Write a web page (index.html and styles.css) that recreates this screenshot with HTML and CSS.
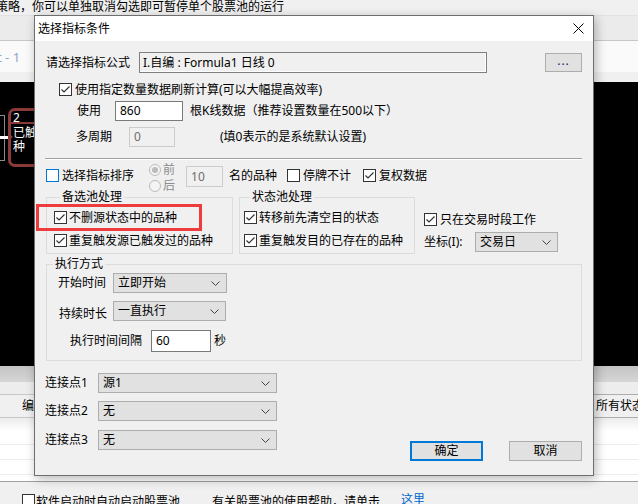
FILE: index.html
```html
<!DOCTYPE html>
<html lang="zh-CN">
<head>
<meta charset="utf-8">
<title>选择指标条件</title>
<link rel="stylesheet" href="styles.css">
</head>
<body>
<div class="bg">
  <div class="msg">策略，你可以单独取消勾选即可暂停单个股票池的运行</div>
  <div class="tabs"></div>
  <div class="toolbar"><span class="tb-text">t - 1</span></div>
  <div class="strip"></div>
  <div class="canvas">
    <div class="node-left"></div>
    <div class="arrow"></div>
    <div class="node">
      <div class="node-num">2</div>
      <div class="node-text">已触发<br>种</div>
    </div>
  </div>
  <div class="sbar"></div>
  <div class="gap"></div>
  <div class="colhdr"><span class="ch-left">编</span><span class="ch-right">所有状态</span></div>
  <div class="listfade"></div>
  <div class="rows"><div class="lrow"></div><div class="lrow"></div><div class="lrow"></div></div>
  <div class="footer">
    <span class="cb ft-cb"></span><span class="ft1">软件启动时自动启动股票池</span>
    <span class="ft2">有关股票池的使用帮助，请单击</span>
    <a class="link">这里</a>
  </div>
</div>

<div class="dialog">
  <div class="titlebar">
    <span class="title">选择指标条件</span>
    <svg class="close" width="11" height="11" viewBox="0 0 11 11"><path d="M0.5 0.5L10.5 10.5M10.5 0.5L0.5 10.5" stroke="#000" stroke-width="1" fill="none"/></svg>
  </div>
  <div class="dbody">
    <div class="r-formula">
      <span class="lbl-formula">请选择指标公式</span>
      <div class="formula">I.自编 : Formula1 日线 0</div>
      <div class="btn-dots">...</div>
    </div>

    <div class="r-chk1">
      <span class="cb"><svg width="11" height="11" viewBox="0 0 11 11"><polyline points="1.5,5.5 4,8 9.5,2.5" stroke="#333" stroke-width="1.2" fill="none"/></svg></span>
      <span class="cbl">使用指定数量数据刷新计算(可以大幅提高效率)</span>
    </div>

    <div class="r-use">
      <span class="lbl-use">使用</span>
      <div class="input in-use">860</div>
      <span class="after-use">根K线数据（推荐设置数量在500以下）</span>
    </div>

    <div class="r-multi">
      <span class="lbl-multi">多周期</span>
      <div class="input disabled in-multi">0</div>
      <span class="after-multi">(填0表示的是系统默认设置)</span>
    </div>

    <div class="sep"></div>

    <div class="r-sort">
      <span class="cb cb-focus s-cb1"></span>
      <span class="s-txt s-l1">选择指标排序</span>
      <div class="radios">
        <div class="rline"><span class="radio on"></span><span class="rl">前</span></div>
        <div class="rline"><span class="radio"></span><span class="rl">后</span></div>
      </div>
      <div class="input disabled in-top">10</div>
      <span class="s-txt s-l2">名的品种</span>
      <span class="cb s-cb2"></span>
      <span class="s-txt s-l3">停牌不计</span>
      <span class="cb s-cb3"><svg width="11" height="11" viewBox="0 0 11 11"><polyline points="1.5,5.5 4,8 9.5,2.5" stroke="#333" stroke-width="1.2" fill="none"/></svg></span>
      <span class="s-txt s-l3">复权数据</span>
    </div>

    <div class="r-groups">
      <fieldset class="grp grp1">
        <legend>备选池处理</legend>
        <div class="gline first"><span class="cb"><svg width="11" height="11" viewBox="0 0 11 11"><polyline points="1.5,5.5 4,8 9.5,2.5" stroke="#333" stroke-width="1.2" fill="none"/></svg></span><span class="gl">不删源状态中的品种</span></div>
        <div class="gline"><span class="cb"><svg width="11" height="11" viewBox="0 0 11 11"><polyline points="1.5,5.5 4,8 9.5,2.5" stroke="#333" stroke-width="1.2" fill="none"/></svg></span><span class="gl">重复触发源已触发过的品种</span></div>
      </fieldset>
      <fieldset class="grp grp2">
        <legend>状态池处理</legend>
        <div class="gline first"><span class="cb"><svg width="11" height="11" viewBox="0 0 11 11"><polyline points="1.5,5.5 4,8 9.5,2.5" stroke="#333" stroke-width="1.2" fill="none"/></svg></span><span class="gl">转移前先清空目的状态</span></div>
        <div class="gline"><span class="cb"><svg width="11" height="11" viewBox="0 0 11 11"><polyline points="1.5,5.5 4,8 9.5,2.5" stroke="#333" stroke-width="1.2" fill="none"/></svg></span><span class="gl">重复触发目的已存在的品种</span></div>
      </fieldset>
      <div class="side">
        <div class="side-chk"><span class="cb"><svg width="11" height="11" viewBox="0 0 11 11"><polyline points="1.5,5.5 4,8 9.5,2.5" stroke="#333" stroke-width="1.2" fill="none"/></svg></span><span class="cbl">只在交易时段工作</span></div>
        <div class="side-axis">
          <span class="lbl-axis">坐标(I):</span>
          <div class="select sel-axis"><span>交易日</span><svg width="9" height="5" viewBox="0 0 9 5"><polyline points="0.5,0.5 4.5,4.5 8.5,0.5" stroke="#444" stroke-width="1" fill="none"/></svg></div>
        </div>
      </div>
    </div>

    <fieldset class="grp exec">
      <legend>执行方式</legend>
      <div class="eline e1">
        <span class="el-lbl">开始时间</span>
        <div class="select sel-start"><span>立即开始</span><svg width="9" height="5" viewBox="0 0 9 5"><polyline points="0.5,0.5 4.5,4.5 8.5,0.5" stroke="#444" stroke-width="1" fill="none"/></svg></div>
      </div>
      <div class="eline e2">
        <span class="el-lbl">持续时长</span>
        <div class="select sel-dur"><span>一直执行</span><svg width="9" height="5" viewBox="0 0 9 5"><polyline points="0.5,0.5 4.5,4.5 8.5,0.5" stroke="#444" stroke-width="1" fill="none"/></svg></div>
      </div>
      <div class="eline e3">
        <span class="el-lbl3">执行时间间隔</span>
        <div class="input in-int">60</div>
        <span class="sec">秒</span>
      </div>
    </fieldset>

    <div class="r-bottom">
      <div class="conns">
        <div class="cline"><span class="c-lbl">连接点1</span><div class="select sel-conn"><span>源1</span><svg width="9" height="5" viewBox="0 0 9 5"><polyline points="0.5,0.5 4.5,4.5 8.5,0.5" stroke="#444" stroke-width="1" fill="none"/></svg></div></div>
        <div class="cline c2"><span class="c-lbl">连接点2</span><div class="select sel-conn"><span>无</span><svg width="9" height="5" viewBox="0 0 9 5"><polyline points="0.5,0.5 4.5,4.5 8.5,0.5" stroke="#444" stroke-width="1" fill="none"/></svg></div></div>
        <div class="cline c3"><span class="c-lbl">连接点3</span><div class="select sel-conn"><span>无</span><svg width="9" height="5" viewBox="0 0 9 5"><polyline points="0.5,0.5 4.5,4.5 8.5,0.5" stroke="#444" stroke-width="1" fill="none"/></svg></div></div>
      </div>
      <div class="btns">
        <div class="btn btn-ok">确定</div>
        <div class="btn btn-cancel">取消</div>
      </div>
    </div>
  </div>
  <div class="highlight"></div>
</div>
</body>
</html>
```

FILE: styles.css
```css
* { box-sizing: border-box; margin: 0; padding: 0; }
html, body { width: 638px; height: 504px; overflow: hidden; }
body {
  background: #f0f0f0;
  font: 12px/16px "Noto Sans", "Noto Sans CJK SC", sans-serif;
  color: #000;
  position: relative;
}

/* ---------- background application ---------- */
.bg { width: 638px; }
.msg { height: 15px; line-height: 14px; margin-left: -4px; white-space: nowrap; background: #f0f0f0; }
.tabs { height: 26px; background: #ebebeb; border-top: 1px solid #e2e2e2; border-bottom: 1px solid #c8c8c8; }
.toolbar { height: 31px; background: #fafafa; display: flex; align-items: center; }
.tb-text { margin-left: -3px; color: #8ba5c4; font-size: 13px; }
.strip { height: 10px; background: #f0f0f0; }
.canvas { height: 284px; background: #000; position: relative; overflow: hidden; }
.node {
  position: absolute; left: 8px; top: 26px; width: 70px; height: 59px;
  border: 3px solid #8b3a3a; border-radius: 7px; color: #fff;
}
.node-num { height: 13px; line-height: 13px; padding-left: 2px; border-bottom: 2px solid #8b3a3a; font-size: 12px; }
.node-text { padding-left: 2px; line-height: 14px; margin-top: 2px; }
.node-left { position: absolute; left: -10px; top: 33px; width: 15px; height: 46px; border: 1px solid #8a8a8a; }
.arrow { position: absolute; left: 0; top: 54px; width: 8px; height: 3px; background: #fff; }
.arrow::after {
  content: ""; position: absolute; left: 8px; top: -3px;
  border-left: 5px solid #8b3a3a; border-top: 4.5px solid transparent; border-bottom: 4.5px solid transparent;
}
.sbar { height: 16px; background: linear-gradient(#c4c4c4, #d6d6d6); }
.gap { height: 12px; background: #ededed; }
.colhdr {
  height: 24px; display: flex; align-items: center;
  background: #f0f0f0; border-top: 1px solid #c8c8c8; border-bottom: 1px solid #c8c8c8;
}
.ch-left { margin-left: 22px; }
.ch-right { margin-left: auto; width: 45px; height: 24px; line-height: 22px; padding-left: 2px; border: 1px solid #adadad; border-right: none; white-space: nowrap; overflow: hidden; }
.listfade { height: 12px; background: linear-gradient(#ececec, #fdfdfd); }
.rows { height: 51px; background: #fff; }
.lrow { height: 15px; border-bottom: 1px solid #ececec; }
.footer { height: 23px; border-top: 1px solid #a0a0a0; background: #f0f0f0; display: flex; align-items: flex-start; padding-top: 12px; white-space: nowrap; }
.ft-cb { margin-left: 22px; }
.ft1 { margin-left: 1px; }
.ft2 { margin-left: 32px; }
.link { margin-left: 21px; margin-top: -2px; color: #0066cc; text-decoration: underline; }

/* ---------- dialog ---------- */
.dialog {
  position: absolute; left: 34px; top: 15px; width: 560px; height: 461px;
  border: 1px solid #6e6e6e; background: #f0f0f0;
  box-shadow: 2px 3px 10px rgba(0, 0, 0, 0.28);
}
.titlebar { height: 25px; background: #fff; display: flex; align-items: center; }
.title { margin-left: 3px; }
.close { margin-left: auto; margin-right: 9px; }
.dbody { white-space: nowrap; }

.cb {
  width: 13px; height: 13px; border: 1px solid #333; background: #fff;
  display: inline-flex; align-items: center; justify-content: center; flex: none;
}
.cb-focus { border-color: #0078d7; }
.input {
  height: 20px; border: 1px solid #7a7a7a; background: #fff;
  line-height: 18px; padding-left: 4px; flex: none;
}
.input.disabled { border-color: #cccccc; background: #f0f0f0; color: #6d6d6d; }
.select {
  height: 20px; border: 1px solid #adadad; background: #e1e1e1;
  display: flex; align-items: center; justify-content: space-between;
  padding: 0 6px 0 4px; flex: none;
}
.select svg { margin-top: 1px; }

.r-formula { display: flex; align-items: center; height: 21px; margin-top: 11px; }
.lbl-formula { margin-left: 11px; width: 93px; }
.formula {
  width: 348px; height: 21px; border: 1px solid #7f7f7f; box-shadow: inset -1px -1px 0 #fff;
  line-height: 19px; padding-left: 3px; background: #f0f0f0;
}
.btn-dots {
  margin-left: 58px; width: 37px; height: 19px; border: 1px solid #adadad; background: #e1e1e1;
  text-align: center; line-height: 14px; color: #1a1a6e; letter-spacing: 1px;
}

.r-chk1 { display: flex; align-items: center; height: 13px; margin-top: 10px; }
.r-chk1 .cb { margin-left: 24px; }
.cbl { margin-left: 3px; }

.r-use { display: flex; align-items: center; height: 20px; margin-top: 5px; }
.lbl-use { margin-left: 42px; width: 38px; }
.in-use { width: 68px; }
.after-use { margin-left: 7px; }

.r-multi { display: flex; align-items: center; height: 20px; margin-top: 6px; }
.lbl-multi { margin-left: 41px; width: 53px; }
.in-multi { width: 46px; }
.after-multi { margin-left: 45px; }

.sep { margin: 11px 0 0 10px; width: 537px; height: 2px; border-top: 1px solid #a0a0a0; border-bottom: 1px solid #fff; }

.r-sort { display: flex; align-items: flex-start; height: 26px; margin-top: 4px; }
.s-cb1 { margin-left: 11px; margin-top: 5px; }
.s-txt { margin-top: 4px; }
.s-l1 { margin-left: 3px; }
.radios { margin-left: 15px; margin-top: -2px; }
.rline { display: flex; align-items: center; height: 16px; }
.radio {
  width: 12px; height: 12px; border-radius: 50%; border: 1px solid #bcbcbc; background: #f4f4f4;
  display: inline-flex; align-items: center; justify-content: center;
}
.radio.on::after { content: ""; width: 6px; height: 6px; border-radius: 50%; background: #bcbcbc; }
.rl { margin-left: 2px; color: #8c8c8c; }
.in-top { width: 37px; height: 21px; margin-left: 11px; margin-top: 2px; line-height: 19px; }
.s-l2 { margin-left: 6px; }
.s-cb2 { margin-left: 10px; margin-top: 5px; }
.s-l3 { margin-left: 3px; }
.s-cb3 { margin-left: 12px; margin-top: 5px; }

.r-groups { display: flex; align-items: flex-start; }
.grp { border: 1px solid #dcdcdc; min-width: 0; }
.grp legend { margin-left: 6px; padding: 0 2px; line-height: 14px; }
.grp1 { margin-left: 11px; width: 187px; padding: 0 0 6px 7px; }
.grp2 { margin-left: 6px; width: 176px; padding: 0 0 6px 4px; }
.gline { display: flex; align-items: center; height: 13px; margin-top: 10px; }
.gline.first { margin-top: 7px; }
.gl { margin-left: 2px; }
.side { margin-left: 9px; }
.side-chk { display: flex; align-items: center; height: 13px; margin-top: 23px; }
.side-axis { display: flex; align-items: center; height: 20px; margin-top: 6px; }
.lbl-axis { width: 51px; }
.sel-axis { width: 83px; }

.exec { margin: 3px 0 0 11px; width: 536px; padding: 0 0 8px 0; }
.eline { display: flex; align-items: center; }
.e1 { margin-top: 2px; height: 20px; }
.e2 { margin-top: 8px; height: 20px; }
.e3 { margin-top: 9px; height: 22px; }
.el-lbl { margin-left: 11px; width: 55px; }
.e2 .el-lbl { margin-left: 12px; width: 54px; margin-top: 6px; }
.sel-start { width: 114px; }
.sel-dur { width: 113px; }
.el-lbl3 { margin-left: 23px; width: 81px; }
.in-int { width: 60px; height: 22px; line-height: 20px; }
.sec { margin-left: 3px; }

.r-bottom { display: flex; align-items: flex-start; margin-top: 12px; }
.cline { display: flex; align-items: center; height: 20px; }
.c2 { margin-top: 8px; }
.c3 { margin-top: 9px; }
.c-lbl { margin-left: 10px; width: 53px; }
.sel-conn { width: 179px; }
.btns { display: flex; margin-left: 133px; margin-top: 68px; }
.btn { width: 73px; height: 20px; background: #e1e1e1; border: 1px solid #adadad; text-align: center; line-height: 18px; }
.btn-ok { border: 2px solid #0078d7; line-height: 16px; }
.btn-cancel { margin-left: 26px; }

.highlight {
  position: absolute; left: 1px; top: 188px; width: 166px; height: 27px;
  border: 3px solid #ee3b3b;
}
```
